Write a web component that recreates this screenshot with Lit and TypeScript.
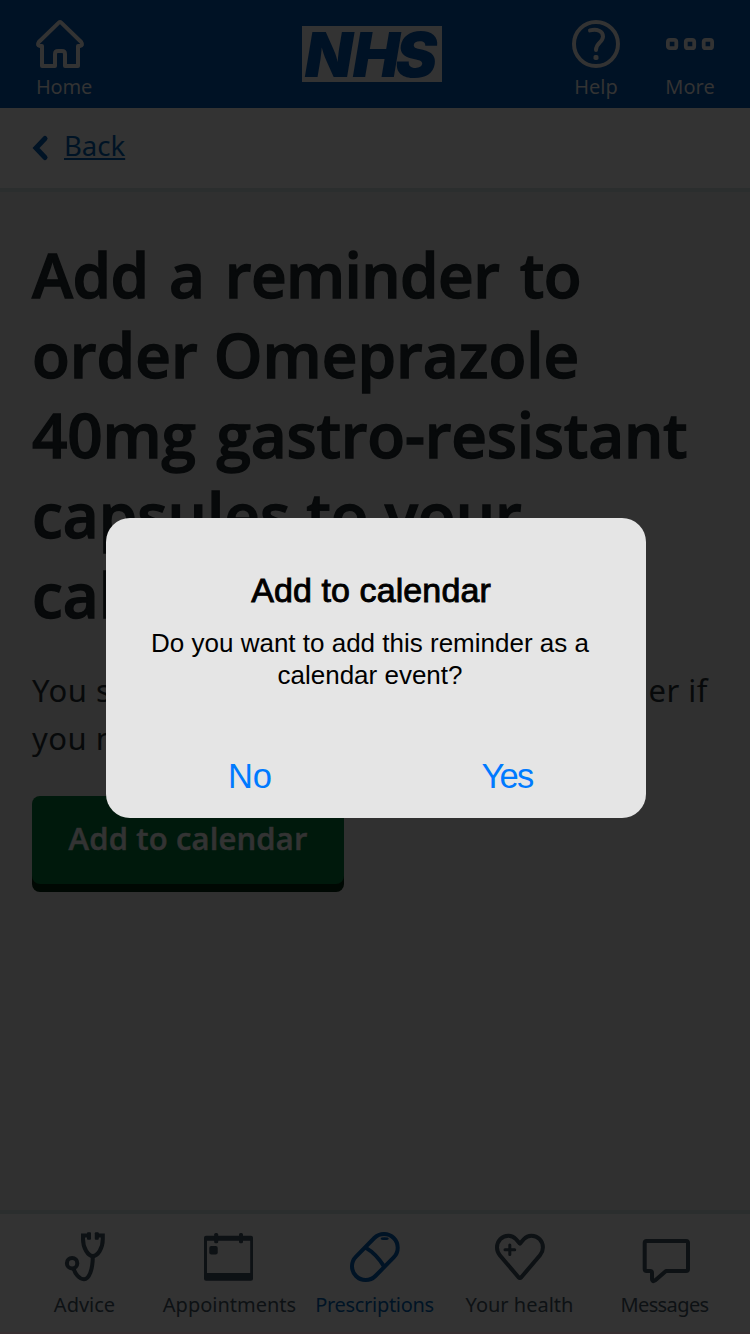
import { LitElement, html, css, svg } from "lit";
import { customElement } from "lit/decorators.js";

const homeIcon = html`<svg class="icon" width="48" height="48" viewBox="0 0 48 48">
  <path d="M22.8 2.6 Q24 1.4 25.2 2.6 L45.2 22 Q47.4 25.4 44 26 H42 V46 H29 V34 Q29 31 26 31 H22 Q19 31 19 34 V46 H6 V26 H4 Q0.6 25.4 2.8 22 Z" stroke-linejoin="round" />
</svg>`;

const helpIcon = html`<svg class="icon" width="48" height="48" viewBox="0 0 48 48">
  <circle cx="24" cy="24" r="22" />
  <path d="M18 10.4 C25 8.6 31 11 31 16.6 C31 22.4 24 22.6 24 30" stroke-linecap="round" />
  <rect class="solid" x="21.5" y="35" width="5" height="5" rx="1.8" />
</svg>`;

const moreIcon = html`<svg class="icon" width="48" height="48" viewBox="0 0 48 48">
  ${[1.9, 19.8, 37.7].map((x) => svg`<rect class="dot" x=${x} y="19.8" width="8.4" height="8.4" rx="2" />`)}
</svg>`;

const adviceIcon = svg`
  <path d="M30 5.6 H25 V9 C25 18 30 26 34.8 26 C40 26 44.8 18 44.8 9 V5.6 H40" />
  <path d="M34.8 26 C34.8 40 31 49.2 26 49.2 C21 49.2 17 43.5 15.8 39" />
  <circle cx="14.1" cy="33.2" r="5.2" />
  <rect class="solid" x="29" y="2.3" width="4" height="7.4" rx="1" />
  <rect class="solid" x="36.8" y="2.3" width="4" height="7.4" rx="1" />`;

const appointmentsIcon = svg`
  <path class="solid" fill-rule="evenodd" d="M3 5.7 H48 Q50 5.7 50 7.7 V48.7 Q50 50.7 48 50.7 H3 Q1 50.7 1 48.7 V7.7 Q1 5.7 3 5.7 Z M4 10.7 V43 H47.2 V10.7 Z" />
  <rect class="solid" x="11.2" y="3" width="4" height="10.3" rx="1.6" />
  <rect class="solid" x="36" y="3" width="4" height="10.3" rx="1.6" />
  <rect class="solid" x="6.3" y="16" width="8.4" height="8.4" rx="2" />`;

const prescriptionsIcon = svg`
  <path d="M26.3 8 A13.7 13.7 0 0 1 45.7 27.4 L27.4 46 A13.7 13.7 0 0 1 8 26.6 Z" />
  <path d="M17.6 17.6 Q28.5 24 36 36.4" />
  <ellipse class="solid" cx="36.7" cy="8.7" rx="4" ry="1.4" />`;

const healthIcon = svg`
  <path stroke-linejoin="round" d="M26.9 13.6 L22.8 9 C20.8 6.8 18 5.7 15.4 5.7 C9 5.7 4 11 4 17.5 C4 20.5 5 23 6.8 25.2 L25.3 47 Q26.9 48.6 28.5 47 L47 25.2 C48.8 23 49.9 20.5 49.9 17.5 C49.9 11 45 5.7 38.4 5.7 C35.6 5.7 33 6.8 31 9 Z" />
  <path class="thin" stroke-linecap="round" d="M12 19.7 H21.7 M16.8 14.9 V24.5" />`;

const messagesIcon = svg`
  <path stroke-linejoin="round" d="M8.7 11 H48 Q50 11 50 13 V39 Q50 41 48 41 H28 L17 50.4 Q14 52.4 14 49 V43 Q14 41 12 41 H8.7 Q6.7 41 6.7 39 V13 Q6.7 11 8.7 11 Z" />`;

const tabs = [
  { label: "Advice", icon: adviceIcon, cls: "" },
  { label: "Appointments", icon: appointmentsIcon, cls: "" },
  { label: "Prescriptions", icon: prescriptionsIcon, cls: "active tight" },
  { label: "Your health", icon: healthIcon, cls: "" },
  { label: "Messages", icon: messagesIcon, cls: "tighter" },
];

@customElement("app-root")
export class AppRoot extends LitElement {
  static styles = css`
    :host {
      display: flex;
      flex-direction: column;
      position: relative;
      width: 750px;
      height: 1334px;
      overflow: hidden;
      background: #303030;
      color: #07090a;
      font-family: "Noto Sans", "Open Sans", sans-serif;
    }
    * { box-sizing: border-box; }
    svg { display: block; overflow: visible; }
    .icon { fill: none; stroke: currentColor; stroke-width: 4; }
    .solid { fill: currentColor; stroke: none; }
    .thin { stroke-width: 3; }
    .dot { stroke-width: 3.8; }

    header {
      flex: none;
      display: flex;
      height: 108px;
      padding: 20px 0 0 36px;
      background: #001225;
      color: #333;
    }
    .action {
      flex: none;
      display: flex;
      flex-direction: column;
      gap: 7px;
      font-size: 20px;
      line-height: 24px;
      white-space: nowrap;
    }
    .home { width: 60px; }
    .home span { letter-spacing: -0.2px; }
    .help { align-items: center; width: 60px; margin-left: 124px; }
    .more { align-items: center; width: 60px; margin-left: 34px; }
    .logo { flex: none; margin: 6px 0 0 206px; width: 140px; height: 56px; background: #333; }
    .logo text {
      font-family: Inter, sans-serif;
      font-size: 62.5px;
      font-style: italic;
      font-weight: 900;
      fill: #001225;
    }

    .backbar {
      flex: none;
      display: flex;
      height: 84px;
      padding: 18px 32px 0;
      background: #333;
      border-bottom: 4px solid #2b2e2e;
      color: #001325;
    }
    .backbar svg { margin-top: 9px; stroke-width: 5; }
    .backbar a {
      margin-left: 16px;
      font-size: 27.5px;
      line-height: 40px;
      text-decoration: underline;
      text-decoration-thickness: 2px;
      text-underline-offset: 2px;
      text-decoration-skip-ink: none;
    }

    main { flex: 1; padding: 42px 32px 0; }
    h1 {
      margin: 0 0 32px;
      font: 600 62px/80px "Open Sans", "Noto Sans", sans-serif;
      -webkit-text-stroke: 1.3px currentColor;
      white-space: nowrap;
    }
    h1 span { display: block; letter-spacing: 0; }
    h1 .first { letter-spacing: -0.6px; word-spacing: 5px; }
    h1 .third { letter-spacing: -0.2px; word-spacing: 5px; }
    p { margin: 0; }
    .info { margin-bottom: 34px; font-size: 31px; line-height: 48px; letter-spacing: 0.5px; }
    .row { display: flex; justify-content: space-between; padding-right: 10px; }
    .cta {
      width: 312px;
      height: 88px;
      padding-top: 20px;
      border-radius: 8px;
      background: #00190c;
      box-shadow: 0 8px 0 #000803;
      color: #333;
      font: 600 31px/44px "Open Sans", "Noto Sans", sans-serif;
      letter-spacing: 0.15px;
      -webkit-text-stroke: 0.6px currentColor;
      text-align: center;
    }

    nav {
      flex: none;
      display: grid;
      grid-template-columns: repeat(5, 145px);
      height: 124px;
      padding: 16px 0 0 12px;
      background: #333;
      border-top: 4px solid #2b2e2e;
      border-bottom: 2px solid #372f31;
      color: #0d1114;
    }
    .tab {
      display: flex;
      flex-direction: column;
      align-items: center;
      gap: 11px;
      font-size: 20px;
      line-height: 24px;
      white-space: nowrap;
    }
    .active { color: #001325; }
    .tight { letter-spacing: -0.3px; }
    .tighter { letter-spacing: -0.6px; }

    .dialog {
      position: absolute;
      left: 106px;
      top: 518px;
      width: 540px;
      height: 300px;
      padding-top: 52px;
      border-radius: 24px;
      background: #e5e5e5;
      color: #000;
      font-family: "Liberation Sans", sans-serif;
      text-align: center;
    }
    .title {
      margin: 0 10px 17px 0;
      font-size: 34px;
      font-weight: 400;
      line-height: 40px;
      letter-spacing: 0.1px;
      -webkit-text-stroke: 0.9px #000;
    }
    .message { margin-right: 12px; font-size: 26px; line-height: 32px; }
    .choices {
      display: grid;
      grid-template-columns: 258px 258px;
      margin: 63px 0 0 15px;
      color: #007aff;
      font-size: 34.5px;
      line-height: 44px;
    }
    .yes { margin-left: -2px; letter-spacing: -1.7px; }
  `;

  render() {
    return html`
      <header>
        <div class="action home">${homeIcon}<span>Home</span></div>
        <svg class="logo" viewBox="0 0 140 56"><text x="2.8 50.8 93.4" y="50.6">NHS</text></svg>
        <div class="action help">${helpIcon}<span>Help</span></div>
        <div class="action more">${moreIcon}<span>More</span></div>
      </header>
      <div class="backbar">
        <svg class="icon" width="16" height="26" viewBox="0 0 16 26">
          <path d="M13 3.5 L4 13 L13 22.5" stroke-linecap="round" />
        </svg>
        <a>Back</a>
      </div>
      <main>
        <h1>
          <span class="first">Add a reminder to</span>
          <span>order Omeprazole</span>
          <span class="third">40mg gastro-resistant</span>
          <span>capsules to your</span>
          <span>calendar</span>
        </h1>
        <div class="info">
          <p class="row"><span>You should only</span><span>set a reminder if</span></p>
          <p>you need to.</p>
        </div>
        <div class="cta">Add to calendar</div>
      </main>
      <nav>
        ${tabs.map(
          (t) => html`<div class="tab ${t.cls}">
            <svg class="icon" width="53" height="52" viewBox="0 0 53 52">${t.icon}</svg>
            <span>${t.label}</span>
          </div>`
        )}
      </nav>
      <div class="dialog">
        <h2 class="title">Add to calendar</h2>
        <p class="message">Do you want to add this reminder as a<br />calendar event?</p>
        <div class="choices"><span>No</span><span class="yes">Yes</span></div>
      </div>
    `;
  }
}
